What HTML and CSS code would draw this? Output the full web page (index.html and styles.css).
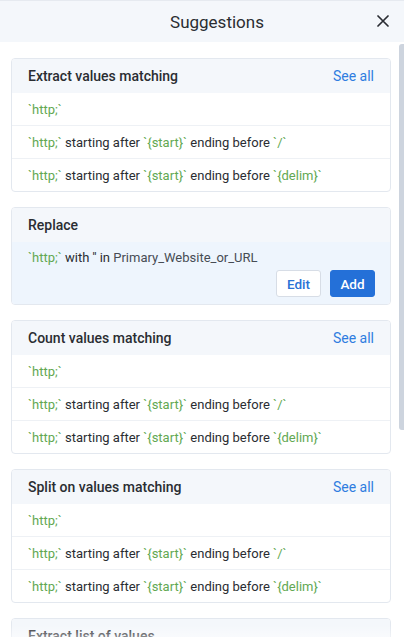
FILE: index.html
```html
<!DOCTYPE html>
<html>
<head>
<meta charset="utf-8">
<link rel="stylesheet" href="styles.css">
</head>
<body>
<div class="panel">
  <header class="top">
    <div class="title">Suggestions</div>
    <button class="close" aria-label="Close">
      <svg width="12" height="12" viewBox="0 0 12 12"><path d="M1 1L11 11M11 1L1 11" stroke="#2a2d33" stroke-width="1.7" stroke-linecap="round"/></svg>
    </button>
  </header>
  <div class="scroll">
    <div class="content">
      <section class="card">
        <div class="card-head"><span class="card-title">Extract values matching</span><a class="see">See all</a></div>
        <div class="row"><span class="g">`http;`</span></div>
        <div class="row"><span class="g">`http;`</span> starting after <span class="g">`{start}`</span> ending before <span class="g">`/`</span></div>
        <div class="row"><span class="g">`http;`</span> starting after <span class="g">`{start}`</span> ending before <span class="g">`{delim}`</span></div>
      </section>
      <section class="card">
        <div class="card-head"><span class="card-title">Replace</span></div>
        <div class="replace-body">
          <div class="replace-text"><span class="g">`http;`</span> with '' in <span class="field">Primary_Website_or_URL</span></div>
          <div class="actions">
            <button class="btn btn-edit">Edit</button>
            <button class="btn btn-add">Add</button>
          </div>
        </div>
      </section>
      <section class="card">
        <div class="card-head"><span class="card-title">Count values matching</span><a class="see">See all</a></div>
        <div class="row"><span class="g">`http;`</span></div>
        <div class="row"><span class="g">`http;`</span> starting after <span class="g">`{start}`</span> ending before <span class="g">`/`</span></div>
        <div class="row"><span class="g">`http;`</span> starting after <span class="g">`{start}`</span> ending before <span class="g">`{delim}`</span></div>
      </section>
      <section class="card">
        <div class="card-head"><span class="card-title">Split on values matching</span><a class="see">See all</a></div>
        <div class="row"><span class="g">`http;`</span></div>
        <div class="row"><span class="g">`http;`</span> starting after <span class="g">`{start}`</span> ending before <span class="g">`/`</span></div>
        <div class="row"><span class="g">`http;`</span> starting after <span class="g">`{start}`</span> ending before <span class="g">`{delim}`</span></div>
      </section>
      <section class="card">
        <div class="card-head"><span class="card-title">Extract list of values</span></div>
        <div class="row"><span class="g">`http;`</span></div>
      </section>
    </div>
    <div class="scrollbar"></div>
  </div>
  <div class="fade"></div>
</div>
</body>
</html>
```

FILE: styles.css
```css
* { box-sizing: border-box; }
html, body { margin: 0; padding: 0; }
body {
  font-family: Roboto, "Liberation Sans", sans-serif;
  background: #ffffff;
  color: #2a2d32;
  width: 404px;
  height: 637px;
  overflow: hidden;
}
.panel {
  position: relative;
  width: 404px;
  height: 637px;
  overflow: hidden;
  display: flex;
  flex-direction: column;
}
.top {
  height: 42px;
  flex: 0 0 42px;
  background: #f4f7fb;
  border-top: 1px solid #e6eaf0;
  display: flex;
  align-items: center;
  justify-content: center;
  position: relative;
}
.title {
  font-size: 17px;
  color: #2a2d32;
  padding-left: 30px;
}
.close {
  position: absolute;
  right: 15px;
  top: 14px;
  width: 12px;
  height: 12px;
  padding: 0;
  border: 0;
  background: none;
  display: flex;
}
.scroll {
  position: relative;
  flex: 1;
  overflow: hidden;
}
.content {
  padding: 16px 13px 0 11px;
  display: flex;
  flex-direction: column;
  gap: 15px;
}
.scrollbar {
  position: absolute;
  right: 0;
  top: 2px;
  width: 5px;
  height: 386px;
  background: #cdd4de;
  border-radius: 3px 0 0 3px;
}
.card {
  border: 1px solid #e3e8ef;
  border-radius: 4px;
  background: #fff;
  overflow: hidden;
}
.card-head {
  height: 34px;
  background: #f4f7fb;
  display: flex;
  align-items: center;
  justify-content: space-between;
  padding: 0 16px 0 16px;
}
.card-title {
  font-size: 14px;
  font-weight: 500;
  color: #2a2d32;
}
.see {
  font-size: 14px;
  color: #2f7de0;
}
.row {
  height: 33px;
  display: flex;
  align-items: center;
  padding: 0 16px;
  font-size: 13px;
  color: #2a2d32;
  border-top: 1px solid #eef1f5;
  white-space: pre;
}
.card-head + .row { border-top: 0; height: 32px; }
.g { color: #62a852; }
.field { color: #474c54; }
.replace-body {
  background: #eef5fd;
  padding: 7px 15px 7px 16px;
}
.replace-text {
  font-size: 13px;
  height: 18px;
  line-height: 18px;
  white-space: pre;
}
.actions {
  display: flex;
  justify-content: flex-end;
  gap: 9px;
  margin-top: 3px;
}
.btn {
  height: 27px;
  border-radius: 3px;
  font-family: Roboto, "Liberation Sans", sans-serif;
  font-size: 13.5px;
  font-weight: 500;
  padding: 0;
}
.btn-edit {
  width: 45px;
  background: #fff;
  color: #2a72d6;
  border: 1px solid #d7dde6;
}
.btn-add {
  width: 45px;
  background: #2470d8;
  color: #fff;
  border: 1px solid #2470d8;
}
.fade {
  position: absolute;
  left: 0;
  right: 0;
  bottom: 0;
  height: 12px;
  background: linear-gradient(to bottom, rgba(255,255,255,0), rgba(255,255,255,0.45));
  pointer-events: none;
}
```
